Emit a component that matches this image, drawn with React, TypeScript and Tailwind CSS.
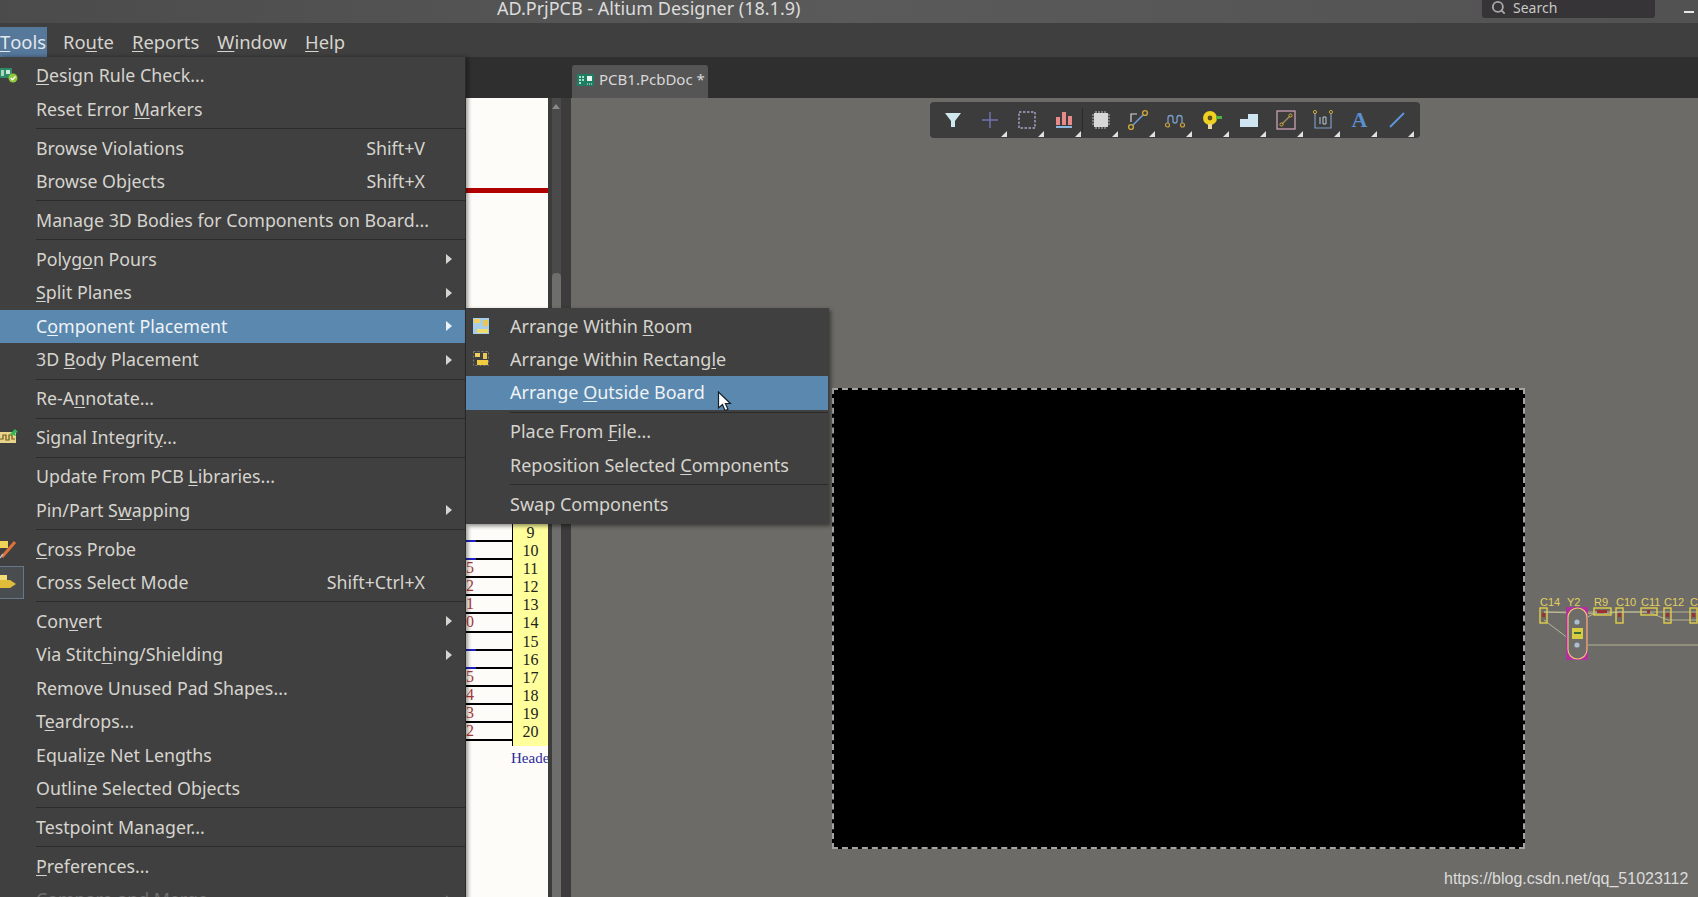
import { SearchIcon } from 'lucide-react';
import type { ReactNode } from 'react';

type Row =
  | 'sep'
  | {
      label: string;
      shortcut?: string;
      sub?: boolean;
      active?: boolean;
      dim?: boolean;
      icon?: ReactNode;
      checked?: boolean;
    };

// & marks the mnemonic letter, same as the real menu resource
function Mnemonic({ text }: { text: string }) {
  const i = text.indexOf('&');
  if (i < 0) return <>{text}</>;
  return (
    <>
      {text.slice(0, i)}
      <u className="underline underline-offset-2">{text[i + 1]}</u>
      {text.slice(i + 2)}
    </>
  );
}

function DrcIcon() {
  return (
    <svg width="20" height="18" viewBox="0 0 20 18">
      <rect x="-4" y="2" width="16" height="10" fill="#2f8a68" />
      <rect x="1" y="4" width="3" height="6" fill="#a8d8c0" />
      <rect x="6" y="4" width="4" height="4" fill="#cfe8dc" />
      <circle cx="13" cy="12" r="4.5" fill="#8fc83a" />
      <path d="M10.8 12l1.7 1.8 3-3.4" fill="none" stroke="#fff" strokeWidth="1.4" />
    </svg>
  );
}

function SignalIcon() {
  return (
    <svg width="20" height="18" viewBox="0 0 20 18">
      <rect x="-2" y="4" width="18" height="11" fill="#e8d58a" />
      <path d="M0 11h3V7h3v5h3V7h3v4h3" fill="none" stroke="#6b5a20" strokeWidth="1.2" />
      <path d="M10 6l5-5 3 3-3 1 1 3z" fill="#2fb85a" />
    </svg>
  );
}

function ProbeIcon() {
  return (
    <svg width="20" height="20" viewBox="0 0 20 20">
      <rect x="0" y="2" width="8" height="7" fill="#f0d458" />
      <path d="M15 3L2 18" stroke="#e07038" strokeWidth="3" />
      <path d="M3 15L0 19" stroke="#c0c0c0" strokeWidth="1.4" />
    </svg>
  );
}

function CrossSelectIcon() {
  return (
    <svg width="18" height="18" viewBox="0 0 18 18">
      <rect x="-2" y="2" width="9" height="7" fill="#f2dc78" />
      <path d="M0 7h10l6 4-6 4H0z" fill="#e0bc38" />
    </svg>
  );
}

const toolsMenu: Row[] = [
  { label: '&Design Rule Check...', icon: <DrcIcon /> },
  { label: 'Reset Error &Markers' },
  'sep',
  { label: 'Browse Violations', shortcut: 'Shift+V' },
  { label: 'Browse Objects', shortcut: 'Shift+X' },
  'sep',
  { label: 'Manage 3D Bodies for Components on Board...' },
  'sep',
  { label: 'Polyg&on Pours', sub: true },
  { label: '&Split Planes', sub: true },
  { label: 'C&omponent Placement', sub: true, active: true },
  { label: '3D &Body Placement', sub: true },
  'sep',
  { label: 'Re-A&nnotate...' },
  'sep',
  { label: 'Signal Integrit&y...', icon: <SignalIcon /> },
  'sep',
  { label: 'Update From PCB &Libraries...' },
  { label: 'Pin/Part S&wapping', sub: true },
  'sep',
  { label: '&Cross Probe', icon: <ProbeIcon /> },
  { label: 'Cross Select Mode', shortcut: 'Shift+Ctrl+X', icon: <CrossSelectIcon />, checked: true },
  'sep',
  { label: 'Con&vert', sub: true },
  { label: 'Via Stitc&hing/Shielding', sub: true },
  { label: 'Remove Unused Pad Shapes...' },
  { label: 'T&eardrops...' },
  { label: 'Equali&ze Net Lengths' },
  { label: 'Outline Selected Objects' },
  'sep',
  { label: 'Testpoint Manager...' },
  'sep',
  { label: '&Preferences...' },
  { label: 'Compare and Merge', sub: true, dim: true },
];

const placementMenu: Row[] = [
  {
    label: 'Arrange Within &Room',
    icon: (
      <svg width="18" height="18" viewBox="0 0 18 18">
        <rect x="1" y="1" width="16" height="16" fill="#a9cfe8" />
        <rect x="2" y="2" width="6" height="4" fill="#f0d060" />
        <rect x="11" y="3" width="5" height="6" fill="#e8c850" />
        <rect x="5" y="12" width="11" height="4" fill="#f0dc70" />
      </svg>
    ),
  },
  {
    label: 'Arrange Within Rectang&le',
    icon: (
      <svg width="18" height="18" viewBox="0 0 18 18">
        <rect x="1.5" y="1.5" width="15" height="14" fill="none" stroke="#7a7a7a" strokeDasharray="2 2" />
        <rect x="3" y="3" width="5" height="4" fill="#f0d060" />
        <rect x="11" y="3" width="4" height="6" fill="#e8c850" />
        <rect x="5" y="10" width="11" height="5" fill="#f0cc40" />
      </svg>
    ),
  },
  { label: 'Arrange &Outside Board', active: true },
  'sep',
  { label: 'Place From &File...' },
  { label: 'Reposition Selected &Components' },
  'sep',
  { label: 'Swap Components' },
];

function MenuRows({ rows, textLeft }: { rows: Row[]; textLeft: string }) {
  return (
    <>
      {rows.map((row, i) => {
        if (row === 'sep') {
          return (
            <div key={i} className={`flex h-[5.6px] items-center ${textLeft}`}>
              <div className="h-px w-full bg-[#2b2b2b]" />
            </div>
          );
        }
        return (
          <div
            key={i}
            className={`relative flex h-[33.4px] items-center ${textLeft} pr-[13px] ${
              row.active ? 'bg-[#5b88ae] text-[#eef3f7]' : row.dim ? 'text-[#6c6c6c]' : 'text-[#d6d4ce]'
            }`}
          >
            {row.checked && (
              <span className="absolute top-0 bottom-0 left-0 w-[24px] border border-l-0 border-[#64798c] bg-[#4a4d50]" />
            )}
            {row.icon && <span className="absolute top-[7px] left-0 flex">{row.icon}</span>}
            <span className="flex-1 whitespace-nowrap">
              <Mnemonic text={row.label} />
            </span>
            {row.shortcut && <span className="mr-[27px] whitespace-nowrap">{row.shortcut}</span>}
            {row.sub && <span className="h-0 w-0 border-y-[5px] border-l-[6px] border-y-transparent border-l-current" />}
          </div>
        );
      })}
    </>
  );
}

function Corner() {
  return <span className="absolute right-[1px] bottom-[1px] h-0 w-0 border-b-[6px] border-l-[6px] border-b-[#e0e0e0] border-l-transparent" />;
}

const toolIcons: ReactNode[] = [
  <svg width="22" height="22" viewBox="0 0 22 22"><path d="M3 4h16l-6 8v6h-4v-6z" fill="#cfe8ee" /></svg>,
  <svg width="22" height="22" viewBox="0 0 22 22"><path d="M11 3v16M3 11h16" stroke="#6f73b0" strokeWidth="1.5" /></svg>,
  <svg width="22" height="22" viewBox="0 0 22 22"><rect x="3" y="3" width="16" height="16" fill="none" stroke="#a7a3c8" strokeWidth="1.4" strokeDasharray="2.5 1.5" /></svg>,
  <svg width="22" height="22" viewBox="0 0 22 22"><rect x="3" y="8" width="4" height="8" fill="#e88a8a" /><rect x="9" y="3" width="4" height="13" fill="#e88a8a" /><rect x="15" y="7" width="4" height="9" fill="#e88a8a" /><rect x="3" y="17" width="16" height="2" fill="#8ab8e0" /></svg>,
  <svg width="22" height="22" viewBox="0 0 22 22"><rect x="4" y="4" width="14" height="14" fill="#d8d8d8" /><path d="M6 2v2M9 2v2M12 2v2M15 2v2M6 18v2M9 18v2M12 18v2M15 18v2M2 6h2M2 9h2M2 12h2M2 15h2M18 6h2M18 9h2M18 12h2M18 15h2" stroke="#bdbdbd" /></svg>,
  <svg width="22" height="22" viewBox="0 0 22 22"><circle cx="4" cy="18" r="2.4" fill="none" stroke="#d0a838" strokeWidth="1.4" /><circle cx="18" cy="4" r="2.4" fill="none" stroke="#d0a838" strokeWidth="1.4" /><path d="M6 16L16 6" stroke="#6f9fd8" strokeWidth="1.5" /><path d="M4 13V5h6" fill="none" stroke="#d8d8d8" strokeWidth="1.2" /></svg>,
  <svg width="22" height="22" viewBox="0 0 22 22"><circle cx="3.5" cy="16" r="2" fill="none" stroke="#c8a040" strokeWidth="1.2" /><circle cx="18.5" cy="16" r="2" fill="none" stroke="#c8a040" strokeWidth="1.2" /><path d="M4 14V9a2.5 2.5 0 0 1 5 0v3a2 2 0 0 0 4 0V9a2.5 2.5 0 0 1 5 0v5" fill="none" stroke="#7a9cc8" strokeWidth="1.3" /></svg>,
  <svg width="22" height="22" viewBox="0 0 22 22"><circle cx="9" cy="9" r="7" fill="#f0d020" /><circle cx="9" cy="9" r="2.4" fill="#5a5020" /><rect x="15" y="7" width="6" height="3" fill="#50b040" /><rect x="7" y="15" width="4" height="5" fill="#e8d8a0" /></svg>,
  <svg width="22" height="22" viewBox="0 0 22 22"><path d="M2 10h8V5h10v13H2z" fill="#cfe6f2" /></svg>,
  <svg width="22" height="22" viewBox="0 0 22 22"><rect x="2" y="2" width="18" height="18" fill="none" stroke="#d8a8c0" strokeWidth="1.2" /><path d="M7 15l8-8" stroke="#a08a60" strokeWidth="1.5" /><circle cx="6.5" cy="15.5" r="1.6" fill="none" stroke="#d0a838" /><circle cx="15.5" cy="6.5" r="1.6" fill="none" stroke="#d0a838" /></svg>,
  <svg width="22" height="22" viewBox="0 0 22 22"><path d="M3 4v15h16V4" fill="none" stroke="#7a9cc8" strokeWidth="1.2" /><circle cx="3" cy="3" r="1.6" fill="none" stroke="#d0a838" /><circle cx="19" cy="3" r="1.6" fill="none" stroke="#d0a838" /><path d="M8 8v7M11 8h3v7h-3z" fill="none" stroke="#b8c8d8" /></svg>,
  <span className="font-['Liberation_Serif',serif] text-[22px] leading-none font-bold text-[#5a8fd0]">A</span>,
  <svg width="22" height="22" viewBox="0 0 22 22"><path d="M4 18L18 4" stroke="#5f95d8" strokeWidth="2" /></svg>,
];

const headerPins = [
  { pin: 9, net: '' },
  { pin: 10, net: '' },
  { pin: 11, net: '5' },
  { pin: 12, net: '2' },
  { pin: 13, net: '1' },
  { pin: 14, net: '0' },
  { pin: 15, net: '' },
  { pin: 16, net: '' },
  { pin: 17, net: '5' },
  { pin: 18, net: '4' },
  { pin: 19, net: '3' },
  { pin: 20, net: '2' },
];

function PcbFragment() {
  const label = { fill: '#e2cf62', fontSize: 11, fontFamily: '"Liberation Sans", sans-serif' };
  const pad = { fill: 'none', stroke: '#e2cf4a', strokeWidth: 1.4 };
  return (
    <svg width="178" height="110" viewBox="0 0 178 110" className="absolute top-[472px] left-[949px]">
      <text x="20" y="36" {...label}>C14</text>
      <text x="47" y="36" {...label}>Y2</text>
      <text x="74" y="36" {...label}>R9</text>
      <text x="96" y="36" {...label}>C10</text>
      <text x="121" y="36" {...label}>C11</text>
      <text x="144" y="36" {...label}>C12</text>
      <text x="170" y="36" {...label}>C13</text>
      <path d="M24 42L82 44 100 42 128 42 148 50 178 50M24 42H178M24 50L57 75M57 52L82 40M57 75H178" fill="none" stroke="#c8c6a0" strokeWidth="0.8" />
      <rect x="46" y="37" width="22" height="53" fill="#b030a0" />
      <rect x="48" y="38" width="19" height="51" rx="9.5" fill="#6d6c68" stroke="#eec070" strokeWidth="1.2" />
      <rect x="52" y="58" width="11" height="11" fill="#d8cc40" />
      <rect x="54" y="62" width="7" height="2" fill="#3a6a40" />
      <circle cx="57" cy="52" r="2.6" fill="#a8c0d0" />
      <circle cx="57" cy="75" r="2.6" fill="#a8c0d0" />
      {[20, 96, 144, 170].map((x) => (
        <g key={x}>
          <rect x={x} y="38" width="7" height="15" {...pad} />
          <rect x={x + 2} y="43" width="3" height="4" fill="#a03030" />
        </g>
      ))}
      <rect x="74" y="38" width="17" height="7" {...pad} />
      <rect x="77" y="40" width="10" height="3" fill="#a03030" />
      <rect x="121" y="38" width="16" height="7" {...pad} />
      <rect x="127" y="40" width="3" height="3" fill="#a03030" />
    </svg>
  );
}

export default function App() {
  return (
    <div className="relative flex h-[897px] w-[1698px] flex-col overflow-hidden bg-[#3d3d3d] font-['Noto_Sans',sans-serif] text-[17.8px] text-[#d6d4ce]">
      {/* title bar */}
      <div className="relative flex h-[23px] shrink-0 items-start bg-gradient-to-r from-[#4b4b4b] via-[#5a5a5a] to-[#525252] pl-[497px]">
        <span className="mt-[-3px] text-[18px] leading-[23px] text-[#dcdcdc]">AD.PrjPCB - Altium Designer (18.1.9)</span>
        <div className="absolute top-0 left-[1482px] flex h-[18px] w-[173px] items-center gap-[7px] rounded-b-[3px] bg-[#363436] pb-[3px] pl-[9px] text-[14px] text-[#c8c8c8]">
          <SearchIcon size={15} strokeWidth={3} className="text-[#a8a8a8]" />
          <span>Search</span>
        </div>
        <div className="absolute top-[11px] left-[1684px] h-[2px] w-[10px] bg-[#e8e8e8]" />
      </div>

      {/* menu bar */}
      <div className="flex h-[34px] shrink-0 items-end bg-[#3f3f3f] text-[18.4px]">
        <div className="flex h-[30px] w-[47px] items-center bg-[#55789b] text-[#e4e8ec]">
          <Mnemonic text="&Tools" />
        </div>
        <div className="ml-[16px] flex h-[30px] items-center gap-[18px]">
          <span><Mnemonic text="Ro&ute" /></span>
          <span><Mnemonic text="&Reports" /></span>
          <span><Mnemonic text="&Window" /></span>
          <span><Mnemonic text="&Help" /></span>
        </div>
      </div>

      {/* document tabs */}
      <div className="flex h-[41px] shrink-0 items-end bg-[#2f2f2f] pl-[572px]">
        <div className="flex h-[33px] w-[136px] items-center gap-[4px] rounded-t-[3px] bg-[#555555] pb-[4px] pl-[5px] text-[15px] whitespace-nowrap text-[#d8d8d8]">
          <svg width="18" height="14" viewBox="0 0 18 14">
            <rect x="0" y="1" width="17" height="12" fill="#1f7d63" />
            <path d="M2 3h2v2H2zM2 6h2v2H2zM2 9h2v2H2zM5 3h2v2H5zM5 6h2v2H5z" fill="#a8e0c8" />
            <rect x="10" y="3" width="5" height="5" fill="#e8f4ee" />
            <path d="M10 11h1M12 11h1M14 11h1" stroke="#e8f4ee" />
          </svg>
          <span>PCB1.PcbDoc *</span>
        </div>
      </div>

      {/* workspace */}
      <div className="relative flex min-h-0 flex-1">
        <div className="relative w-[548px] shrink-0 bg-[#fdfcf8] font-['Liberation_Serif',serif]">
          <div className="mt-[90px] h-[5px] bg-[#b00000]" />
          <div className="absolute top-[425px] left-[466px] w-[82px]">
            <div className="h-px w-[46px] bg-black" />
            {headerPins.map((p) => (
              <div key={p.pin} className="flex h-[18.1px] items-stretch">
                <div className="relative w-[46px] border-b-2 border-black text-[16px] leading-[16px] text-[#a83a3a]">
                  {p.net}
                  {!p.net && <span className="absolute bottom-[-2px] left-0 h-[2px] w-[10px] bg-[#2020c0]" />}
                </div>
                <div className="flex-1 border-l border-black bg-[#ffff9c] text-center text-[16px] leading-[18px] text-[#222]">{p.pin}</div>
              </div>
            ))}
            <div className="ml-[46px] h-[5px] border-l border-black bg-[#ffff9c]" />
            <div className="mt-[2px] ml-[45px] w-[37px] overflow-hidden text-[15px] leading-[20px] whitespace-nowrap text-[#2a2a9a]">Header</div>
          </div>
        </div>
        <div className="relative w-[23px] shrink-0 bg-[#3c3c3c]">
          <div className="ml-[4px] h-full w-[9px] bg-[#4a4a4a] pt-[175px]">
            <div className="h-full w-full rounded-t-[4px] bg-[#6e6e6c]" />
          </div>
          <span className="absolute top-[6px] left-[4px] h-0 w-0 border-x-[4px] border-b-[5px] border-x-transparent border-b-[#8a8a8a]" />
        </div>
        <div className="relative flex-1 bg-[#6c6b67]">
          {/* placement toolbar */}
          <div className="absolute top-[4px] left-[359px] flex h-[36px] w-[490px] items-center rounded-[4px] bg-[#3c3c3c] pl-[4px]">
            {toolIcons.map((icon, i) => (
              <div key={i} className={`relative flex h-full w-[37px] items-center justify-center ${i === 3 ? 'after:absolute after:top-[6px] after:right-[-1px] after:h-[24px] after:w-px after:bg-[#2a2a2a]' : ''}`}>
                {icon}
                {i > 0 && <Corner />}
              </div>
            ))}
          </div>
          {/* board outline */}
          <div className="absolute top-[290px] left-[261px] h-[461px] w-[693px] border-2 border-dashed border-[#a4a4a0] bg-black" />
          <PcbFragment />
          <div className="absolute top-[769px] left-[873px] font-['Liberation_Sans',sans-serif] text-[16px] text-[#dcdcdc]">https://blog.csdn.net/qq_51023112</div>
        </div>
      </div>

      {/* open menus */}
      <div className="absolute top-[57px] left-0 h-[860px] w-[466px] border-r border-[#2b2b2b] bg-[#404040] pt-[2px] shadow-[2px_0_4px_rgba(0,0,0,0.4)]">
        <MenuRows rows={toolsMenu} textLeft="pl-[36px]" />
      </div>
      <div className="absolute top-[308px] left-[466px] w-[363px] bg-[#404040] pt-[1.5px] pr-[1px] pb-[3px] text-[18px] shadow-[2px_2px_4px_rgba(0,0,0,0.45)]">
        <div className="[&_span.absolute]:left-[6px]">
          <MenuRows rows={placementMenu} textLeft="pl-[44px]" />
        </div>
      </div>

      {/* mouse pointer */}
      <svg width="16" height="22" viewBox="0 0 16 22" className="absolute top-[391px] left-[717px]">
        <path d="M1.5 1v16l4-3.5 2.5 6 3-1.2-2.6-5.8h5z" fill="#fff" stroke="#15202b" strokeWidth="1.2" />
      </svg>
    </div>
  );
}
